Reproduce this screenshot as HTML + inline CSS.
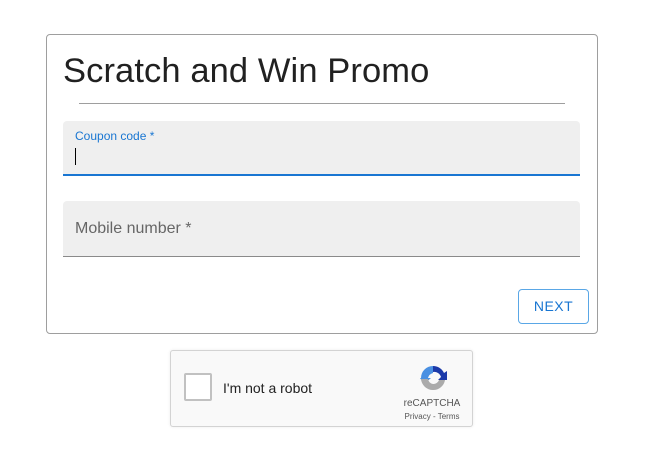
<!DOCTYPE html><html><head><style>
body{margin:0;background:#fff;font-family:"Liberation Sans",sans-serif;width:667px;height:460px;position:relative;overflow:hidden}
.card{position:absolute;left:46px;top:34px;width:550px;height:298px;border:1px solid #9e9e9e;border-radius:4px}
h1{position:absolute;left:63px;top:52px;margin:0;font-size:34.5px;font-weight:400;color:#212121;letter-spacing:0.1px}
.hr{position:absolute;left:79px;top:103px;width:486px;height:1px;background:#9e9e9e}
.f{position:absolute;left:63px;width:517px;background:#efefef;border-radius:4px 4px 0 0}
.btn{position:absolute;left:518px;top:289px;border:1px solid #5aa7e6;border-radius:4px;color:#1976d2;font-size:14px;letter-spacing:.5px;text-align:center;line-height:33px;box-sizing:border-box;width:71px;height:35px}
.rc{position:absolute;left:170px;top:350px;width:301px;height:75px;background:#f9f9f9;border:1px solid #d3d3d3;border-radius:3px;box-shadow:0 0 3px rgba(0,0,0,.08)}
</style></head><body>
<div class="card"></div>
<h1>Scratch and Win Promo</h1>
<div class="hr"></div>
<div class="f" style="top:121px;height:53px;border-bottom:2px solid #1976d2">
<div style="position:absolute;left:12px;top:8px;font-size:12px;color:#1976d2">Coupon code *</div>
<div style="position:absolute;left:12px;top:27px;width:1px;height:17px;background:#000"></div></div>
<div class="f" style="top:201px;height:55px;border-bottom:1px solid #8a8a8a">
<div style="position:absolute;left:12px;top:19px;font-size:16px;color:#666">Mobile number *</div></div>
<div class="btn">NEXT</div>
<div class="rc">
<div style="position:absolute;left:13px;top:22px;width:24px;height:24px;border:2px solid #c1c1c1;border-radius:2px;background:#fff"></div>
<div style="position:absolute;left:52px;top:29px;font-size:14px;color:#222">I'm not a robot</div>
<svg style="position:absolute;left:246px;top:11px" width="32" height="32" viewBox="0 0 32 32"><path d="M16 4a12 12 0 0 1 11 7l3-2v9h-9l3-3a7 7 0 0 0-8-5z" fill="#1c3aa9"/><path d="M4 16A12 12 0 0 1 16 4v7a7 7 0 0 0-5 5l3 0-7 6-4-6z" fill="#4a90e2"/><path d="M16 28A12 12 0 0 1 4 17h7a6 6 0 0 0 5 5 6 6 0 0 0 6-4h6a12 12 0 0 1-12 10z" fill="#ababab"/></svg>
<div style="position:absolute;left:221px;top:47px;width:80px;text-align:center;font-size:10px;color:#555">reCAPTCHA</div>
<div style="position:absolute;left:221px;top:61px;width:80px;text-align:center;font-size:8px;color:#555">Privacy - Terms</div>
</div>
</body></html>
